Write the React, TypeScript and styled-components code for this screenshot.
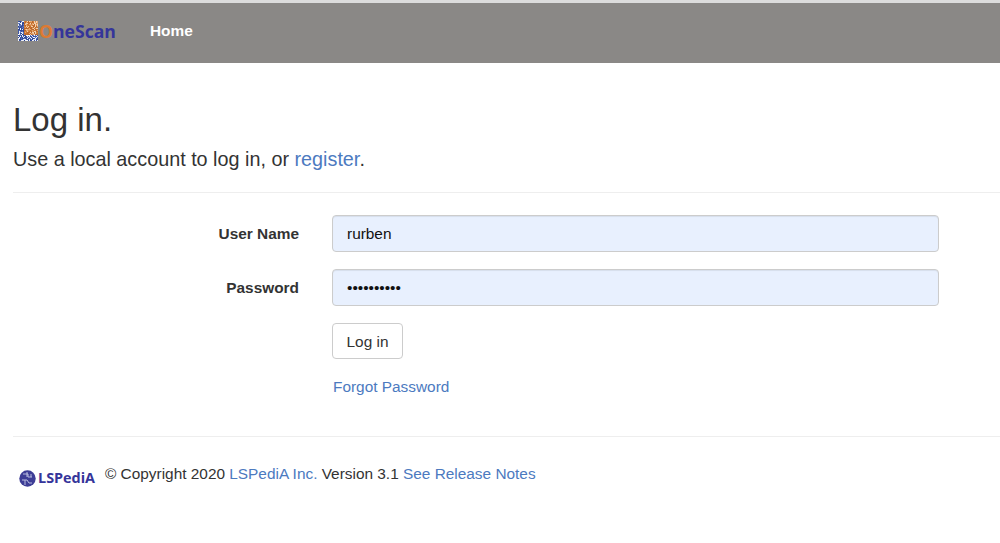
import styled, { createGlobalStyle } from "styled-components";

const GlobalStyle = createGlobalStyle`
  html, body {
    margin: 0;
    padding: 0;
    background: #fff;
    font-family: "Liberation Sans", Arial, sans-serif;
    font-size: 15.4px;
    color: #333;
  }
  * { box-sizing: border-box; }
`

const TopEdge = styled.div`
  height: 3px;
  background: #dcdcdc;
`

const Navbar = styled.nav`
  display: flex;
  align-items: center;
  height: 60px;
  background: #8a8886;
  padding-left: 18px;
`

const Brand = styled.a`
  display: flex;
  align-items: center;
  gap: 1px;
  width: 132px;
  font-family: "Open Sans", sans-serif;
  font-size: 17.6px;
  font-weight: 700;
  color: #35359a;
  margin-top: -4px;
`

const BrandO = styled.span`
  color: #dd7a32;
`

const NavLink = styled.a`
  color: #fff;
  font-size: 15.4px;
  font-weight: 700;
  margin-top: -5px;
`

const Main = styled.main`
  padding-left: 13px;
`

const Title = styled.h2`
  margin: 39px 0 0;
  font-size: 33px;
  line-height: 36px;
  font-weight: 400;
  color: #333;
`

const SubTitle = styled.h4`
  margin: 10px 0 0;
  font-size: 19.8px;
  line-height: 22px;
  font-weight: 400;
  color: #333;
`

const Link = styled.a`
  color: #4c7abf;
`

const Rule = styled.hr`
  border: 0;
  border-top: 1px solid #eee;
  margin: 0;
`

const FormRule = styled(Rule)`
  margin-top: 22px;
`

const Form = styled.form`
  display: grid;
  grid-template-columns: 286px 607px;
  column-gap: 33px;
  row-gap: 17px;
  margin-top: 22px;
  align-items: center;
`

const Label = styled.label`
  text-align: right;
  font-weight: 700;
  font-size: 15.4px;
  color: #333;
`

const Input = styled.input`
  width: 100%;
  height: 37px;
  padding: 0 14px;
  background: #e8f0fe;
  border: 1px solid #ccc;
  border-radius: 4px;
  font-family: "Liberation Sans", Arial, sans-serif;
  font-size: 15.4px;
  color: #111;
  box-shadow: inset 0 1px 1px rgba(0, 0, 0, 0.075);
  outline: none;
`

const Actions = styled.div`
  grid-column: 2;
  display: flex;
  flex-direction: column;
  align-items: flex-start;
`

const Button = styled.button`
  height: 36px;
  width: 71px;
  background: #fff;
  border: 1px solid #ccc;
  border-radius: 4px;
  font-family: "Liberation Sans", Arial, sans-serif;
  font-size: 15.4px;
  color: #333;
  padding: 2px 0 0;
`

const ForgotLink = styled(Link)`
  margin-top: 19px;
  margin-left: 1px;
  line-height: 18px;
`

const FooterRule = styled(Rule)`
  margin-top: 40px;
`

const Footer = styled.footer`
  display: flex;
  align-items: flex-start;
  margin-top: 28px;
  padding-left: 6px;
  font-size: 15.4px;
  line-height: 18px;
`

const FooterLogo = styled.span`
  display: flex;
  align-items: center;
  gap: 2px;
  width: 86px;
  margin-top: 4px;
  font-family: "Open Sans", sans-serif;
  font-size: 14.4px;
  font-weight: 700;
  color: #35359a;
`

const Pad = styled.span`
  white-space: pre;
`

const QR_SIZE = 20

// speckled QR mark: orange block top right, blue along the left and bottom
const qrCells = Array.from({ length: QR_SIZE * QR_SIZE }, (_, i) => {
  const x = i % QR_SIZE
  const y = Math.floor(i / QR_SIZE)
  const noise = Math.floor(Math.abs(Math.sin(x * 12.9898 + y * 78.233) * 43758.5453)) % 5
  const orange = x >= 6 && y < 14
  const palette = orange
    ? ["#c8702e", "#e6a672", "#b9662a", "#f2cfae", "#d28440"]
    : ["#3f57a6", "#dfe6f5", "#5b74ba", "#f4f6fb", "#2f4796"]
  return { x, y, fill: palette[noise] }
})

const QrLogo = () => (
  <svg width={QR_SIZE} height={QR_SIZE} viewBox="0 0 20 20" style={{ display: "block" }}>
    {qrCells.map((c) => (
      <rect key={`${c.x}-${c.y}`} x={c.x} y={c.y} width={1} height={1} fill={c.fill} />
    ))}
  </svg>
)

const GlobeLogo = () => (
  <svg width={17} height={17} viewBox="0 0 17 17" style={{ display: "block" }}>
    <circle cx={8.5} cy={8.5} r={8.2} fill="#3d3d96" />
    <path d="M4 4h5v3h4M3 10h5l2 3h3M8 2v5M6 10v5M12 4v3" stroke="#b9bcdf" strokeWidth={1} fill="none" />
  </svg>
)

const App = () => {
  return (
    <>
      <GlobalStyle />
      <TopEdge />
      <Navbar>
        <Brand>
          <QrLogo />
          <span><BrandO>O</BrandO>neScan</span>
        </Brand>
        <NavLink>Home</NavLink>
      </Navbar>
      <Main>
        <Title>Log in.</Title>
        <SubTitle>Use a local account to log in, or <Link>register</Link>.</SubTitle>
        <FormRule />
        <Form>
          <Label>User Name</Label>
          <Input defaultValue="rurben" />
          <Label>Password</Label>
          <Input type="password" defaultValue="abcdefghij" />
          <Actions>
            <Button type="button">Log in</Button>
            <ForgotLink>Forgot Password</ForgotLink>
          </Actions>
        </Form>
        <FooterRule />
        <Footer>
          <FooterLogo><GlobeLogo />LSPediA</FooterLogo>
          <Pad>© Copyright 2020 <Link>LSPediA Inc.</Link> Version 3.1 <Link>See Release Notes</Link></Pad>
        </Footer>
      </Main>
    </>
  )
}

export default App
